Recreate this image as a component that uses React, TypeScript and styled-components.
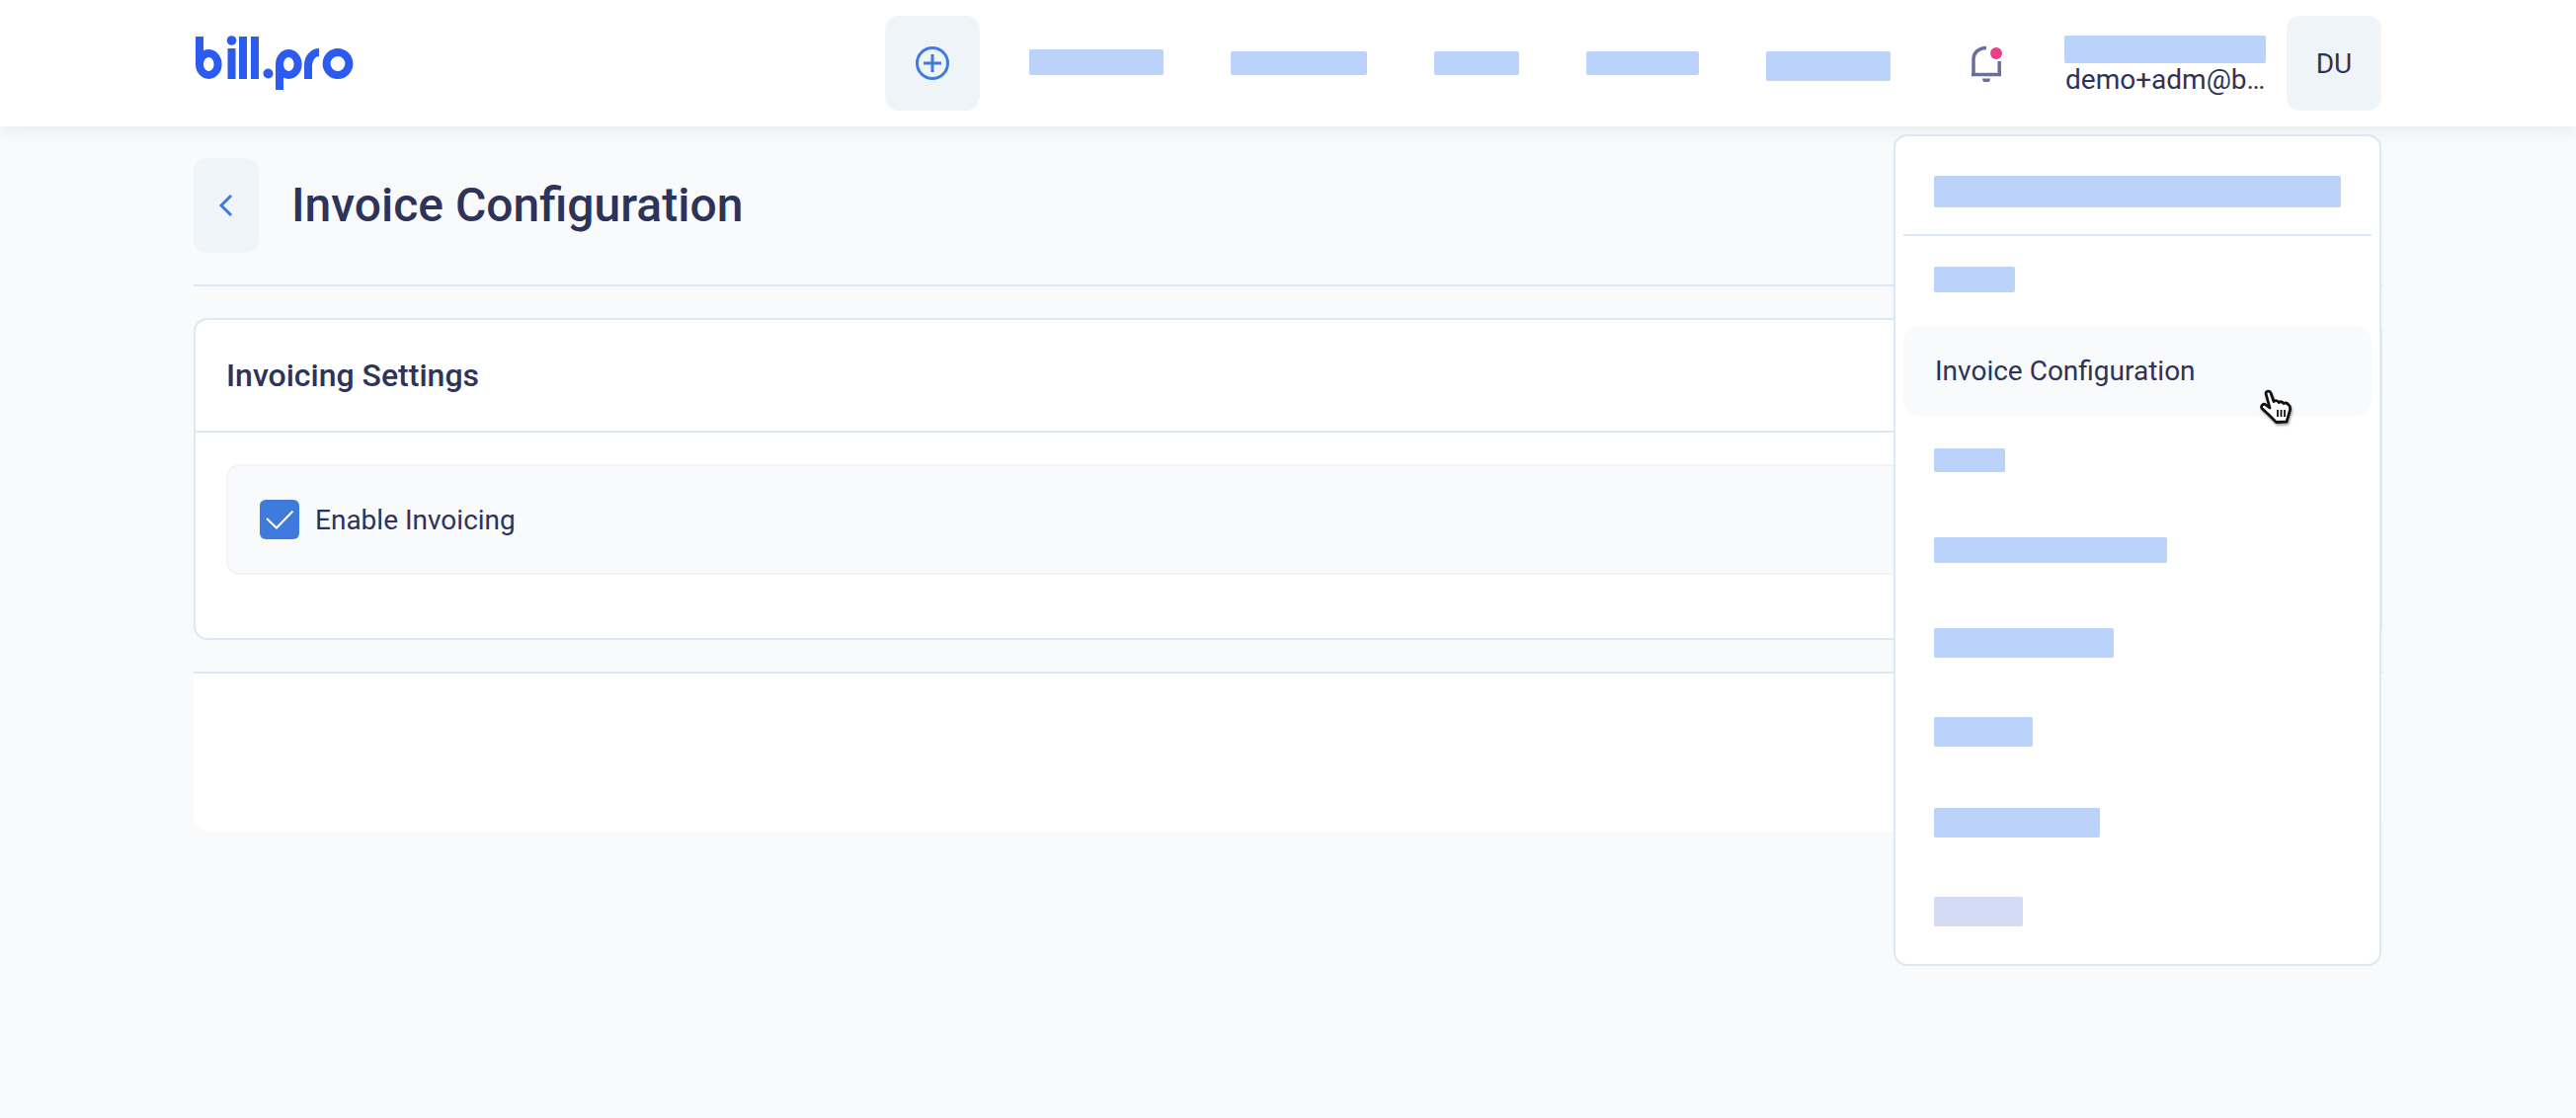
import React, { FC } from "react";
import styled, { createGlobalStyle } from "styled-components";

const GlobalStyle = createGlobalStyle`
  html, body {
    margin: 0;
    padding: 0;
    background: #f8fafc;
    font-family: Roboto, "Liberation Sans", sans-serif;
    color: #2d3359;
  }
  * {
    box-sizing: border-box;
  }
`;

const Page = styled.div`
  position: relative;
  width: 100%;
  min-height: 1132px;
  background: #f8fafc;
`;

const Header = styled.header`
  display: flex;
  align-items: flex-start;
  height: 128px;
  padding: 16px 196px 0;
  background: #fff;
  box-shadow: 0 2px 20px rgba(30, 40, 70, 0.09);
`;

const LogoLink = styled.a`
  display: block;
  width: 170px;
  height: 64px;
  margin: 16px 530px 0 0;
  flex: none;
`;

const SquareButton = styled.button<{ $width?: number }>`
  display: flex;
  align-items: center;
  justify-content: center;
  flex: none;
  width: ${(props) => props.$width ?? 96}px;
  height: 96px;
  padding: 0;
  border: 0;
  border-radius: 14px;
  background: #eff4f9;
  color: #2d3359;
  font: 400 28px Roboto, sans-serif;
`;

const Nav = styled.nav`
  display: flex;
  align-items: flex-start;
  gap: 68px;
  margin-left: 50px;
`;

const Redacted = styled.span<{ $width: number; $height: number; $top?: number; $color?: string }>`
  display: block;
  flex: none;
  width: ${(props) => props.$width}px;
  height: ${(props) => props.$height}px;
  margin-top: ${(props) => props.$top ?? 0}px;
  border-radius: 2px;
  background: ${(props) => props.$color ?? "#bbd3fa"};
`;

const BellWrap = styled.div`
  flex: none;
  width: 32px;
  height: 38px;
  margin: 29px 62px 0 82px;
`;

const Profile = styled.div`
  flex: none;
  width: 204px;
  margin-right: 21px;
  padding-top: 20px;
`;

const Email = styled.div`
  padding-left: 1px;
  font-size: 28px;
  line-height: 34px;
  white-space: nowrap;
`;

const Main = styled.main`
  padding: 32px 196px 0;
`;

const TitleRow = styled.div`
  display: flex;
  align-items: center;
  gap: 33px;
  padding-bottom: 32px;
  border-bottom: 2px solid #dce8f3;
`;

const Title = styled.h1`
  margin: 0;
  font-size: 48px;
  font-weight: 500;
  line-height: 56px;
`;

const Card = styled.section`
  margin-top: 32px;
  height: 326px;
  border: 2px solid #dce8f3;
  border-radius: 14px;
  background: #fff;
`;

const CardHeader = styled.div`
  display: flex;
  align-items: center;
  height: 114px;
  padding: 0 31px;
  border-bottom: 2px solid #dce8f3;
`;

const CardTitle = styled.h2`
  margin: 0;
  font-size: 32px;
  font-weight: 500;
`;

const CardBody = styled.div`
  padding: 32px 32px 0 31px;
`;

const OptionRow = styled.label`
  display: flex;
  align-items: center;
  gap: 16px;
  height: 112px;
  padding-left: 32px;
  border: 2px solid #f1f4f8;
  border-radius: 14px;
  background: #f8fafc;
  font-size: 28px;
`;

const CheckBox = styled.span`
  display: flex;
  align-items: center;
  justify-content: center;
  width: 40px;
  height: 40px;
  border-radius: 6px;
  background: #3f7bdc;
`;

const FooterPanel = styled.div`
  height: 162px;
  margin-top: 32px;
  border-top: 2px solid #dce8f3;
  border-radius: 0 0 16px 16px;
  background: #fff;
`;

const Dropdown = styled.div`
  position: absolute;
  top: 136px;
  right: 197px;
  width: 494px;
  padding: 0 8px 9px;
  border: 2px solid #dce8f3;
  border-radius: 14px;
  background: #fff;
`;

const DropdownHead = styled.div`
  height: 101px;
  padding: 40px 0 0 31px;
  border-bottom: 2px solid #dce8f3;
`;

const MenuItem = styled.div<{ $active?: boolean; $top?: number }>`
  position: relative;
  display: flex;
  align-items: ${(props) => (props.$active ? "center" : "flex-start")};
  height: 91px;
  padding: ${(props) => props.$top ?? 0}px 0 0 ${(props) => (props.$active ? 32 : 31)}px;
  border-radius: 16px;
  background: ${(props) => (props.$active ? "#f8fafc" : "transparent")};
  font-size: 28px;
`;

const Cursor = styled.svg`
  position: absolute;
  top: 64px;
  left: 361px;
  filter: drop-shadow(1px 2px 1px rgba(0, 0, 0, 0.35));
`;

const Logo: FC = () => (
  <svg width="170" height="64" viewBox="196 32 170 64" role="img" aria-label="bill.pro">
    <g fill="none" stroke="#2c5bf0" strokeWidth="8">
      <path d="M202 37V65a9.3 11 0 1 0 18.6 0a9.3 11 0 1 0-18.6 0" />
      <path d="M234.5 49V80M246 37V80M258 37V80" />
      <path d="M283 91V65a9.3 11 0 1 1 18.6 0a9.3 11 0 1 1-18.6 0" />
      <path d="M312 80V66a11 13 0 0 1 11-13" />
      <circle cx="342" cy="64.5" r="11.4" />
    </g>
    <circle cx="234.5" cy="41" r="4.8" fill="#2c5bf0" />
    <circle cx="271.5" cy="74.5" r="5" fill="#2c5bf0" />
  </svg>
);

const PlusIcon: FC = () => (
  <svg width="36" height="36" viewBox="0 0 36 36" fill="none" stroke="#3f7bdc" strokeWidth="3">
    <circle cx="18" cy="18" r="15.5" />
    <path d="M9 18H27M18 9V27" />
  </svg>
);

const BackIcon: FC = () => (
  <svg width="16" height="24" viewBox="0 0 16 24" fill="none" stroke="#3f7bdc" strokeWidth="3">
    <path d="M13 2L3 12L13 22" />
  </svg>
);

const BellIcon: FC = () => (
  <svg width="32" height="38" viewBox="0 0 32 38" fill="none" stroke="#6a6e98" strokeWidth="3.5">
    <path d="M15 3.5C7 3.5 2 8.5 2 15.5V31" />
    <path d="M28.2 17V31M0 30.5H30" />
    <path d="M11 34.5h8a4 4 0 0 1-8 0z" fill="#6a6e98" stroke="none" />
    <circle cx="25" cy="9" r="6" fill="#ea3f87" stroke="none" />
  </svg>
);

const CheckIcon: FC = () => (
  <svg width="28" height="20" viewBox="0 0 28 20" fill="none" stroke="#fff" strokeWidth="2">
    <path d="M1 9L11 18.5L27.5 1.5" />
  </svg>
);

const HandCursor: FC = () => (
  <Cursor width="32" height="36" viewBox="0 0 32 36">
    <path
      d="M6 4.5C6 2 10 1 11 4L14 12.5Q17 10.5 19 13.5Q22 11.5 24 14.5Q27.5 13 29 16Q31 17 30.5 21L28.5 28L27 33L16.5 33.5L9 26L2 19.5C.5 17 3.5 14 6 16L10 19Z"
      fill="#fff"
      stroke="#111"
      strokeWidth="2.8"
      strokeLinejoin="round"
    />
    <path d="M18 21V28M21.5 21V28M25 21V28" stroke="#111" strokeWidth="1.8" />
  </Cursor>
);

const navBars = [
  { width: 136, height: 26, top: 34 },
  { width: 138, height: 24, top: 36 },
  { width: 86, height: 24, top: 36 },
  { width: 114, height: 24, top: 36 },
  { width: 126, height: 30, top: 36 },
];

const menuBars = [
  { width: 82, height: 26, top: 31 },
  { label: "Invoice Configuration" },
  { width: 72, height: 24, top: 33 },
  { width: 236, height: 26, top: 32 },
  { width: 182, height: 30, top: 33 },
  { width: 100, height: 30, top: 32 },
  { width: 168, height: 30, top: 33 },
  { width: 90, height: 30, top: 32, color: "#d4dbf4" },
];

const App: FC = () => {
  return (
    <Page>
      <GlobalStyle />
      <Header>
        <LogoLink>
          <Logo />
        </LogoLink>
        <SquareButton>
          <PlusIcon />
        </SquareButton>
        <Nav>
          {navBars.map((bar, i) => (
            <Redacted key={i} $width={bar.width} $height={bar.height} $top={bar.top} />
          ))}
        </Nav>
        <BellWrap>
          <BellIcon />
        </BellWrap>
        <Profile>
          <Redacted $width={204} $height={28} />
          <Email>demo+adm@b…</Email>
        </Profile>
        <SquareButton>DU</SquareButton>
      </Header>
      <Main>
        <TitleRow>
          <SquareButton $width={66}>
            <BackIcon />
          </SquareButton>
          <Title>Invoice Configuration</Title>
        </TitleRow>
        <Card>
          <CardHeader>
            <CardTitle>Invoicing Settings</CardTitle>
          </CardHeader>
          <CardBody>
            <OptionRow>
              <CheckBox>
                <CheckIcon />
              </CheckBox>
              Enable Invoicing
            </OptionRow>
          </CardBody>
        </Card>
        <FooterPanel />
      </Main>
      <Dropdown>
        <DropdownHead>
          <Redacted $width={412} $height={32} />
        </DropdownHead>
        {menuBars.map((item, i) =>
          item.label ? (
            <MenuItem key={i} $active>
              {item.label}
              <HandCursor />
            </MenuItem>
          ) : (
            <MenuItem key={i} $top={item.top}>
              <Redacted $width={item.width!} $height={item.height!} $color={item.color} />
            </MenuItem>
          )
        )}
      </Dropdown>
    </Page>
  );
};

export default App;
